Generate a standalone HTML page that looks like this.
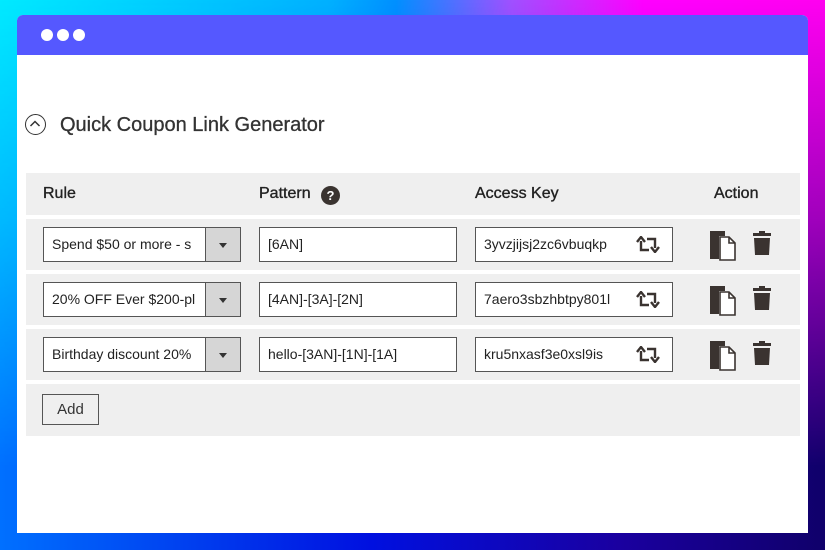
<!DOCTYPE html>
<html><head><style>
*{margin:0;padding:0;box-sizing:border-box}
body{width:825px;height:550px;overflow:hidden;font-family:"Liberation Sans",sans-serif;color:#222;position:relative;
background:linear-gradient(90deg,#0070ff 0%,#0010e0 45%,#1a00a0 75%,#10006a 100%)}
.top{position:absolute;left:0;top:0;width:825px;height:550px;
background:linear-gradient(90deg,#00eaff 0%,#00b0ff 40%,#0090ff 48%,#a050ff 62%,#ff00ff 78%,#ff00f0 100%);
-webkit-mask-image:linear-gradient(180deg,#000 0%,rgba(0,0,0,.6) 40%,rgba(0,0,0,0) 85%);mask-image:linear-gradient(180deg,#000 0%,rgba(0,0,0,.6) 40%,rgba(0,0,0,0) 85%)}
.win{position:absolute;left:17px;top:15px;width:791px;height:518px;background:#fff;border-radius:6px 6px 0 0;overflow:hidden}
.bar{height:40px;background:#5558ff;position:relative}
.dot{position:absolute;top:14px;width:12px;height:12px;border-radius:50%;background:#fff}
.title{position:absolute;left:43px;top:99px;font-size:20px;color:#333;-webkit-text-stroke:0.3px #333}
.circ{position:absolute;left:8px;top:99px;width:21px;height:21px;border:1.5px solid #333;border-radius:50%}
.row{position:absolute;left:9px;width:774px;background:#efefef}
.h{position:absolute;font-size:16px;color:#222;top:12px;-webkit-text-stroke:0.35px #222}
.in{position:absolute;top:8px;height:35px;border:1px solid #555;background:#fff;font-size:14px;line-height:33px;padding-left:8px;white-space:nowrap;overflow:hidden}
.dd{position:absolute;right:0;top:0;width:35px;height:33px;background:#d6d6d6;border-left:1px solid #555}
.dd:after{content:"";position:absolute;left:13px;top:15px;border:4px solid transparent;border-top:5px solid #333}
</style></head><body>
<div class="top"></div>
<div class="win">
<div class="bar"><div class="dot" style="left:24px"></div><div class="dot" style="left:40px"></div><div class="dot" style="left:56px"></div></div>
<div class="circ"><svg width="18" height="18" viewBox="0 0 18 18" style="position:absolute;left:0;top:0"><path d="M4.5 11 L9 6.5 L13.5 11" fill="none" stroke="#333" stroke-width="1.5"/></svg></div>
<div class="title">Quick Coupon Link Generator</div>

<div class="row" style="top:158px;height:42px">
<div class="h" style="left:17px">Rule</div>
<div class="h" style="left:233px">Pattern <span style="display:inline-block;width:19px;height:19px;border-radius:50%;background:#3a3330;color:#fff;font-size:13px;font-weight:bold;text-align:center;line-height:19px;margin-left:6px;vertical-align:-2px;-webkit-text-stroke:0">?</span></div>
<div class="h" style="left:449px">Access Key</div>
<div class="h" style="left:688px">Action</div>
</div>

<div class="row" style="top:204px;height:51px">
<div class="in" style="left:17px;width:198px">Spend $50 or more - s<div class="dd"></div></div>
<div class="in" style="left:233px;width:198px">[6AN]</div>
<div class="in" style="left:449px;width:198px">3yvzjijsj2zc6vbuqkp<svg style="position:absolute;right:12px;top:8px" width="24" height="17" viewBox="0 0 24 17"><path d="M5 5V14H13M1 6l4-5 4 5M19 12V3H11M15 11l4 5 4-5" fill="none" stroke="#3a3330" stroke-width="2.4"/></svg></div>
<svg style="position:absolute;left:683px;top:10px" width="28" height="32" viewBox="0 0 28 32"><path d="M1 2h15v5H10v23H1z" fill="#3a3330"/><path d="M11 8h9l6 6v17H11z" fill="#fff" stroke="#3a3330" stroke-width="1.6"/><path d="M20 8v6h6" fill="none" stroke="#3a3330" stroke-width="1.6"/></svg>
<svg style="position:absolute;left:726px;top:11px" width="20" height="26" viewBox="0 0 20 26"><path d="M7 1h6v2h6v3H1V3h6z M2 8h16l-1 17H3z" fill="#3a3330"/></svg>
</div>

<div class="row" style="top:259px;height:51px">
<div class="in" style="left:17px;width:198px">20% OFF Ever $200-pl<div class="dd"></div></div>
<div class="in" style="left:233px;width:198px">[4AN]-[3A]-[2N]</div>
<div class="in" style="left:449px;width:198px">7aero3sbzhbtpy801l<svg style="position:absolute;right:12px;top:8px" width="24" height="17" viewBox="0 0 24 17"><path d="M5 5V14H13M1 6l4-5 4 5M19 12V3H11M15 11l4 5 4-5" fill="none" stroke="#3a3330" stroke-width="2.4"/></svg></div>
<svg style="position:absolute;left:683px;top:10px" width="28" height="32" viewBox="0 0 28 32"><path d="M1 2h15v5H10v23H1z" fill="#3a3330"/><path d="M11 8h9l6 6v17H11z" fill="#fff" stroke="#3a3330" stroke-width="1.6"/><path d="M20 8v6h6" fill="none" stroke="#3a3330" stroke-width="1.6"/></svg>
<svg style="position:absolute;left:726px;top:11px" width="20" height="26" viewBox="0 0 20 26"><path d="M7 1h6v2h6v3H1V3h6z M2 8h16l-1 17H3z" fill="#3a3330"/></svg>
</div>

<div class="row" style="top:314px;height:51px">
<div class="in" style="left:17px;width:198px">Birthday discount 20%<div class="dd"></div></div>
<div class="in" style="left:233px;width:198px">hello-[3AN]-[1N]-[1A]</div>
<div class="in" style="left:449px;width:198px">kru5nxasf3e0xsl9is<svg style="position:absolute;right:12px;top:8px" width="24" height="17" viewBox="0 0 24 17"><path d="M5 5V14H13M1 6l4-5 4 5M19 12V3H11M15 11l4 5 4-5" fill="none" stroke="#3a3330" stroke-width="2.4"/></svg></div>
<svg style="position:absolute;left:683px;top:10px" width="28" height="32" viewBox="0 0 28 32"><path d="M1 2h15v5H10v23H1z" fill="#3a3330"/><path d="M11 8h9l6 6v17H11z" fill="#fff" stroke="#3a3330" stroke-width="1.6"/><path d="M20 8v6h6" fill="none" stroke="#3a3330" stroke-width="1.6"/></svg>
<svg style="position:absolute;left:726px;top:11px" width="20" height="26" viewBox="0 0 20 26"><path d="M7 1h6v2h6v3H1V3h6z M2 8h16l-1 17H3z" fill="#3a3330"/></svg>
</div>

<div class="row" style="top:369px;height:52px">
<div style="position:absolute;left:16px;top:10px;width:57px;height:31px;border:1px solid #555;font-size:15px;line-height:29px;text-align:center;color:#333">Add</div>
</div>
</div>
</body></html>
